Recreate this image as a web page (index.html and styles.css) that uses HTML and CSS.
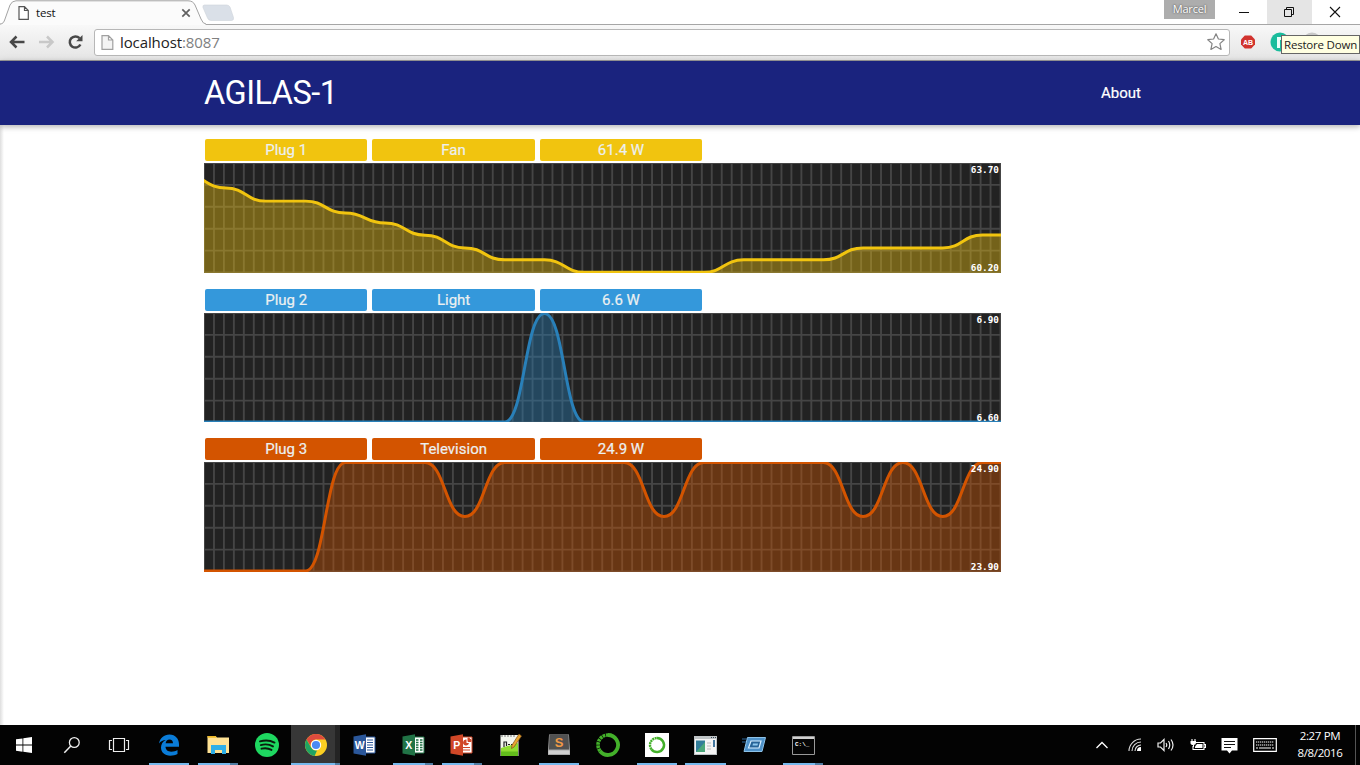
FILE: index.html
```html
<!DOCTYPE html>
<html lang="en">
<head>
<meta charset="utf-8">
<title>test</title>
<link rel="stylesheet" href="styles.css">
</head>
<body>
<div class="screen">
  <div class="tabstrip">
    <div class="tab">
      <svg class="tab-shape" width="206" height="25" viewBox="0 0 206 25"><path d="M0 24.5C3 24 4 22 5 19L10 5Q12 .8 16 .8H188Q193 .8 195 5L201 19Q203 24 206 24.5V25H0Z" fill="#fbfbfb"/><path d="M0 24C3 24 4 22 5 19L10 5Q12 .8 16 .8H188Q193 .8 195 5L201 19Q203 24 206 24" fill="none" stroke="#a3a3a3"/></svg>
      <svg class="page-icon" width="12" height="14" viewBox="0 0 12 14"><path d="M1 .7H6.5L10.3 4.5V13.3H1ZM6.5 .7V4.5H10.3" fill="#fff" stroke="#555" stroke-width="1.2"/></svg>
      <span class="tab-title">test</span>
      <svg class="tab-close" width="10" height="10" viewBox="0 0 10 10"><path d="M1.3 1.3L8.7 8.7M8.7 1.3L1.3 8.7" stroke="#606060" stroke-width="1.7"/></svg>
    </div>
    <svg class="new-tab" width="34" height="18" viewBox="0 0 34 18"><path d="M3.5 1H25.5Q28 1 29 3L32.5 13.5Q33 16.5 30.5 16.5H10Q7.500 16.500 6.500 14L2 3.500Q1.400 1 3.500 1Z" fill="#dae0e8" stroke="#cfd4da" stroke-width=".6"/></svg>
    <div class="user">Marcel</div>
    <div class="win-btn"><svg width="12" height="12" viewBox="0 0 12 12"><path d="M1 6.500H11" stroke="#111"/></svg></div>
    <div class="win-btn restore"><svg width="12" height="12" viewBox="0 0 12 12"><path d="M1.500 3.500H8.500V10.500H1.500ZM3.500 3.500V1.500H10.500V8.500H8.500" fill="none" stroke="#111"/></svg></div>
    <div class="win-btn"><svg width="12" height="12" viewBox="0 0 12 12"><path d="M1 1L11 11M11 1L1 11" stroke="#111" stroke-width="1.100"/></svg></div>
  </div>

  <div class="toolbar">
    <svg class="nav" width="84" height="20" viewBox="0 0 84 20">
      <path d="M9.500 4.500L4 10L9.500 15.500M4.500 10H17.500" fill="none" stroke="#484848" stroke-width="2.500"/>
      <path d="M40 4.500L45.500 10L40 15.500M45 10H32" fill="none" stroke="#c8c8c8" stroke-width="2.500"/>
      <path d="M73.400 12.500A5.600 5.600 0 1 1 72.500 6.200" fill="none" stroke="#484848" stroke-width="2.500"/><path d="M75.500 3V9.300H69.200Z" fill="#484848"/>
    </svg>
    <div class="omnibox">
      <svg width="13" height="15" viewBox="0 0 13 15"><path d="M1 .7H7.500L11.800 5V14.300H1ZM7.500 .7V5H11.800" fill="#f4f4f4" stroke="#a0a0a0" stroke-width="1.200"/></svg>
      <span class="url">localhost<span class="port">:8087</span></span>
      <svg class="star" width="20" height="20" viewBox="0 0 20 20"><path d="M10 1.800L12.400 7L18.200 7.700L13.900 11.600L15.100 17.400L10 14.500L4.900 17.400L6.100 11.600L1.800 7.700L7.600 7Z" fill="#fff" stroke="#848484" stroke-width="1.200" stroke-linejoin="round"/></svg>
    </div>
    <svg class="abp" width="16" height="16" viewBox="0 0 16 16"><path d="M4.800 1.500H11.200L15 5.500V10.500L11.200 14.500H4.800L1 10.500V5.500Z" fill="#d1332e"/><text x="8" y="10.700" class="abp-text">AB</text></svg>
    <svg class="ext" width="60" height="20" viewBox="0 0 60 20"><circle cx="10" cy="10" r="9.500" fill="#1abc9c"/><path d="M7 5H12V8H10V16H7Z" fill="#e9fff9"/><circle cx="42" cy="10" r="9.500" fill="#c8c8c8"/></svg>
    <div class="tooltip">Restore Down</div>
  </div>

  <header class="app-bar"><h1 class="brand">AGILAS-1</h1><a class="about">About</a></header>

  <main class="content">
    <section class="plug yellow" data-chart="0"><div class="chips"><span>Plug 1</span><span>Fan</span><span>61.4 W</span></div></section>
    <section class="plug blue" data-chart="1"><div class="chips"><span>Plug 2</span><span>Light</span><span>6.6 W</span></div></section>
    <section class="plug orange" data-chart="2"><div class="chips"><span>Plug 3</span><span>Television</span><span>24.9 W</span></div></section>
  </main>

  <footer class="taskbar">
    <div class="slot sys"><svg width="16" height="16" viewBox="0 0 16 16"><path d="M0 2.300L6.500 1.400V7.500H0ZM7.300 1.300L16 0V7.500H7.300ZM0 8.400H6.500V14.700L0 13.800ZM7.300 8.400H16V16L7.300 14.800Z" fill="#fff"/></svg></div>
    <div class="slot search"><svg width="18" height="18" viewBox="0 0 18 18"><circle cx="11.300" cy="6.500" r="4.900" fill="none" stroke="#eee" stroke-width="1.300"/><path d="M7.800 10L1.300 16.700" stroke="#eee" stroke-width="1.500"/></svg></div>
    <div class="slot views"><svg width="22" height="16" viewBox="0 0 22 16"><path d="M5.500 1.500H16.500V14.500H5.500ZM4 3.500H1.500V12.500H4M18 3.500H20.500V12.500H18" fill="none" stroke="#eee" stroke-width="1.200"/></svg></div>
    <div class="slot run"><svg width="22" height="22" viewBox="0 0 22 22"><path d="M1 9.500C2 4 6 .5 11.500 .5C17.500 .5 21 5 21 10.300V12.800H7.500C7.700 16 10 17.700 13.200 17.700C15.800 17.700 17.800 17 19.500 16V20C17.500 21.200 15 21.700 12.300 21.700C6.500 21.700 3 18.200 3 13.500C3 10.300 4.800 7.500 7.800 6C5.200 6.200 2.500 7.300 1 9.500ZM7.600 9.300H15C15 6.800 13.700 5.500 11.500 5.500C9.300 5.500 8 7 7.600 9.300Z" fill="#0a7cd8"/></svg></div>
    <div class="slot run multi"><svg width="24" height="22" viewBox="0 0 24 22"><path d="M1.500 2H9.500L11 3.500H23V19H1.500Z" fill="#ffe294"/><path d="M1.500 2H9.500L11 3.800H1.500Z" fill="#eeb927"/><path d="M5 11H20V20H16V16H9V20H5Z" fill="#2eafe8"/></svg></div>
    <div class="slot"><svg width="24" height="24" viewBox="0 0 24 24"><circle cx="12" cy="12" r="12" fill="#1ed760"/><path d="M5 8.400C10 6.900 15.500 7.400 19.500 9.600M5.800 12.100C10 10.900 14.500 11.400 18 13.400M6.500 15.700C10 14.800 13.500 15.200 16.500 16.900" fill="none" stroke="#0a1b0d" stroke-width="1.900" stroke-linecap="round"/></svg></div>
    <div class="slot run chrome multi"><svg width="22" height="22" viewBox="0 0 22 22"><circle cx="11" cy="11" r="11" fill="#fbcf22"/><path d="M1.500 5.500A11 11 0 0 1 20.500 5.500H11A5.500 5.500 0 0 0 5.800 12.500Z" fill="#dd4b3e"/><path d="M1.500 5.500L6.200 13.700A5.500 5.500 0 0 0 12 16.400L9.600 21.900A11 11 0 0 1 1.500 5.500Z" fill="#1fa463"/><circle cx="11" cy="11" r="5.200" fill="#fff"/><circle cx="11" cy="11" r="4.100" fill="#4a8af4"/></svg></div>
    <div class="slot"><svg width="23" height="22" viewBox="0 0 23 22"><path d="M12 3H22V19H12Z" fill="#fff" stroke="#2b579a"/><path d="M14 6H20M14 8.500H20M14 11H20M14 13.500H20M14 16H20" stroke="#2b579a"/><path d="M.5 2.500L13 .3V21.700L.5 19.500Z" fill="#2b579a"/><text x="6.800" y="15" class="office">W</text></svg></div>
    <div class="slot run multi"><svg width="23" height="22" viewBox="0 0 23 22"><path d="M12 3H22V19H12Z" fill="#fff" stroke="#217346"/><path d="M14 6H16.500M18 6H20.500M14 8.500H16.500M18 8.500H20.500M14 11H16.500M18 11H20.500M14 13.500H16.500M18 13.500H20.500M14 16H16.500M18 16H20.500" stroke="#217346" stroke-width="1.400"/><path d="M.5 2.500L13 .3V21.700L.5 19.500Z" fill="#217346"/><text x="6.800" y="15" class="office">X</text></svg></div>
    <div class="slot run multi"><svg width="23" height="22" viewBox="0 0 23 22"><path d="M12 3H22V19H12Z" fill="#fff" stroke="#d04727"/><path d="M16.500 5.500A3 3 0 1 0 19 9H16.500Z" fill="#d04727"/><path d="M18 4V7.500H21A3 3 0 0 0 18 4ZM13 13.500H20M13 16H20" fill="#d04727" stroke="#d04727"/><path d="M.5 2.500L13 .3V21.700L.5 19.500Z" fill="#d04727"/><text x="6.800" y="15" class="office">P</text></svg></div>
    <div class="slot"><svg width="23" height="24" viewBox="0 0 23 24"><path d="M1.500 2H19.500V23H1.500Z" fill="#f4f6ef"/><path d="M2 15L19 10V23H2Z" fill="#91dd32"/><path d="M2 18.500H19V23H2Z" fill="#63bd1c"/><path d="M3 2V4M6 2V4M9 2V4M12 2V4M15 2V4" stroke="#777"/><path d="M5 14V9H7.500V13M9 11.500H11M12 11.500H14" fill="none" stroke="#222" stroke-width="1.200"/><path d="M20 1L22.500 3L15 14L12.500 15.500L13 12Z" fill="#eaa631" stroke="#80511d" stroke-width=".7"/></svg></div>
    <div class="slot run"><svg width="24" height="22" viewBox="0 0 24 22"><path d="M2 .5H22L23 17V21H1V17Z" fill="#a9a9a9"/><path d="M2.500 1H21.500L22 15.500H2Z" fill="#515151"/><path d="M1.500 16.500H22.500V20H1.500Z" fill="#d0d0d0"/><text x="12" y="13" class="sublime">S</text></svg></div>
    <div class="slot"><svg width="24" height="24" viewBox="0 0 24 24"><path d="M12 2A10 10 0 1 1 4 18" fill="none" stroke="#43b02a" stroke-width="3.800"/><path d="M4 18A10 10 0 0 1 12 2" fill="none" stroke="#43b02a" stroke-width="3.600" stroke-dasharray="2.600 .7"/></svg></div>
    <div class="slot run"><svg width="24" height="24" viewBox="0 0 24 24"><path d="M0 0H24V24H0Z" fill="#fff"/><path d="M12 5A7 7 0 1 1 6.400 16.200" fill="none" stroke="#43b02a" stroke-width="2.500"/><path d="M6.400 16.200A7 7 0 0 1 12 5" fill="none" stroke="#43b02a" stroke-width="2.400" stroke-dasharray="2 .6"/></svg></div>
    <div class="slot run"><svg width="23" height="19" viewBox="0 0 23 19"><path d="M0 0H23V19H0Z" fill="#bfc4c6"/><path d="M1 3H22V18H1Z" fill="#f5f5f5"/><path d="M2 4.500H11V16H2Z" fill="#327e9a"/><path d="M2 16L11 6V16Z" fill="#4ba77a"/><path d="M13 7H17M13 10H17M13 13H17" stroke="#bbb"/><path d="M19 4H21V11H19Z" fill="#4478a0"/><path d="M17 1.500H22" stroke="#345" stroke-dasharray="1 1"/></svg></div>
    <div class="slot"><svg width="24" height="18" viewBox="0 0 24 18"><path d="M5.500 1.500H23.500L20 15.500H2Z" fill="#4e91c8" stroke="#8dc2e8"/><path d="M9 5H19L17 12H6.500Z" fill="#286498" stroke="#d8efff" stroke-width="1.200"/><path d="M11 7.500H16L15.500 9.500H10.500Z" fill="#8fc9ef"/><path d="M0 3H5M0 6H4" stroke="#2e6798"/></svg></div>
    <div class="slot run multi"><svg width="23" height="19" viewBox="0 0 23 19"><path d="M.5 .5H22.500V18.500H.5Z" fill="#050505" stroke="#999"/><path d="M1 1H22V3H1Z" fill="#d0d0d0"/><text x="3" y="9.500" class="cmd">C:\_</text></svg></div>
    <div class="tray">
      <svg class="chev" width="14" height="10" viewBox="0 0 14 10"><path d="M1.500 8L7 2.500L12.500 8" fill="none" stroke="#fff" stroke-width="1.300"/></svg>
      <svg class="wifi" width="14" height="14" viewBox="0 0 14 14"><path d="M1 13A12 12 0 0 1 13 1M4 13A9 9 0 0 1 13 4M7 13A6 6 0 0 1 13 7" fill="none" stroke="#ddd" stroke-width="1.100"/><path d="M13 9V13H9A4 4 0 0 1 13 9Z" fill="#fff"/></svg>
      <svg class="vol" width="18" height="14" viewBox="0 0 18 14"><path d="M1 5H3.500L7 1.500V12.500L3.500 9H1ZM9 5Q10.500 7 9 9M11.500 3Q14 7 11.500 11M14 1.500Q18 7 14 12.500" fill="none" stroke="#eee" stroke-width="1.200"/></svg>
      <svg class="bat" width="17" height="14" viewBox="0 0 17 14"><path d="M6 4.500H15V11.500H4V8M15 6.500H16.500V9.500H15M3 3V1M6 3V1M4.500 7V9" fill="none" stroke="#fff" stroke-width="1.100"/><path d="M1.500 3H7V5Q7 7 4.500 7Q1.500 7 1.500 5Z" fill="#fff"/><path d="M8 6H13.500V10H6V8.500Z" fill="#fff"/></svg>
      <svg class="note" width="17" height="17" viewBox="0 0 17 17"><path d="M.5 1H16.500V13.500H11L8.500 16.500L6 13.500H.5Z" fill="#fff"/><path d="M3 4.500H14M3 7.500H14M3 10.500H10" stroke="#111" stroke-width="1.100"/></svg>
      <svg class="kbd" width="24" height="14" viewBox="0 0 24 14"><path d="M.7 .7H23.300V13.300H.7Z" fill="none" stroke="#fff" stroke-width="1.200"/><path d="M3 4H21M3 7H21" stroke="#fff" stroke-width="1.200" stroke-dasharray="1.300 .7"/><path d="M3 10H5M6 10H18M19 10H21" stroke="#fff" stroke-width="1.200"/></svg>
      <div class="clock"><span>2:27 PM</span><span>8/8/2016</span></div>
    </div>
  </footer>
</div>
<script src="charts.js"></script>
</body>
</html>
```
FILE: charts.js
```js
// Each series: [x, y] samples in an 800 x 110 drawing, joined by horizontal-tangent curves.
const X = k => 102 + 40 * k;
const charts = [
  { max: "63.70", min: "60.20", ys: [13, 25.2, 38.3, 38.3, 50.3, 60.3, 72.5, 85.3, 97.3, 97.3, 109.8, 109.8, 109.8, 109.8, 97.3, 97.3, 97.3, 85.3, 85.3, 85.3, 72.3, 72.3] },
  { max: "6.90", min: "6.60", ys: Array.from({ length: 22 }, (_, i) => (i === 9 ? 0.5 : 109.5)) },
  { max: "24.90", min: "23.90", ys: Array.from({ length: 22 }, (_, i) => (i < 4 ? 109.5 : [7, 12, 17, 19].includes(i) ? 54.8 : 0.5)) }
];

document.querySelectorAll(".plug").forEach(el => {
  const c = charts[el.dataset.chart];
  let px = X(-3), py = c.ys[0];
  let line = `M${px} ${py}`;
  c.ys.slice(1).forEach((y, i) => {
    const x = X(i - 2), m = (px + x) / 2;
    line += `C${m} ${py} ${m} ${y} ${x} ${y}`;
    px = x;
    py = y;
  });
  let grid = "";
  for (let x = 0; x <= 800; x += 10) grid += `M${x} 0V110`;
  for (let y = 0; y <= 110; y += 22) grid += `M0 ${y}H800`;
  el.insertAdjacentHTML("beforeend",
    `<svg class="chart" viewBox="0 0 800 110" preserveAspectRatio="none">
      <path class="grid" d="${grid}"/>
      <path class="area" d="${line}V112H${X(-3)}Z"/>
      <path class="line" d="${line}"/>
      <text x="798.500" y="10">${c.max}</text>
      <text x="798.500" y="108">${c.min}</text>
    </svg>`);
});
```
FILE: styles.css
```css
* { box-sizing: border-box; }
body { margin: 0; background: #fff; overflow: hidden; }
svg { display: block; flex: none; }
.screen { width: 1360px; height: 765px; display: flex; flex-direction: column; font-family: "Open Sans", "Noto Sans", sans-serif; }

.tabstrip { height: 25px; flex: none; display: flex; align-items: flex-start; border-bottom: 1px solid #a6a6a6; background: #fff; }
.tab { position: relative; width: 206px; height: 25px; display: flex; align-items: center; padding: 1px 15px 0 18px; flex: none; }
.tab-shape { position: absolute; left: 0; top: 0; }
.page-icon, .tab-title, .tab-close { position: relative; }
.tab-title { margin-left: 6px; font-size: 11.5px; letter-spacing: -.15px; line-height: 16px; color: #111; flex: 1; }
.new-tab { margin: 4px 0 0 -5px; }
.user { margin-left: auto; width: 51px; height: 19px; background: #adadad; color: #fff; font-size: 11px; letter-spacing: -.2px; line-height: 17px; text-align: center; text-shadow: 0 0 2px #333; margin-right: 7px; }
.win-btn { width: 45px; height: 24px; display: flex; align-items: center; justify-content: center; flex: none; padding-right: 1px; }
.win-btn.restore { background: #e5e5e5; }
.win-btn:last-child { width: 48px; padding-right: 2px; }

.toolbar { position: relative; height: 36px; flex: none; display: flex; align-items: center; background: linear-gradient(#f8f8f8, #e5e5e5); border-bottom: 1px solid #9b9b9b; padding: 0 0 1px 7px; }
.omnibox { margin-left: 3px; width: 1136px; height: 27px; border: 1px solid #b7b7b7; border-radius: 3px; background: #fff; display: flex; align-items: center; padding: 0 3px 0 6px; }
.url { flex: 1; margin-left: 6px; font-size: 15px; letter-spacing: -.1px; line-height: 22px; color: #222; }
.port { color: #808080; }
.abp { margin-left: 10px; }
.abp-text { font: bold 7px "Liberation Sans", sans-serif; fill: #fff; text-anchor: middle; }
.ext { margin-left: 14px; }
.tooltip { position: absolute; left: 1281px; top: 10px; width: 79px; height: 19px; background: #ffffe1; border: 1px solid #666; color: #222; font-size: 11.5px; letter-spacing: -.2px; line-height: 18px; text-align: center; white-space: nowrap; }

.app-bar { height: 64px; flex: none; background: #1a237e; color: #fff; font-family: Roboto, sans-serif; display: flex; align-items: center; justify-content: space-between; padding: 0 219px 0 204px; box-shadow: 0 2px 5px rgba(0,0,0,.2), 0 1px 8px rgba(0,0,0,.12); z-index: 1; }
.brand { margin: 0; font-size: 32.5px; letter-spacing: -.5px; font-weight: 400; line-height: 64px; }
.about { font-size: 15px; -webkit-text-stroke: .2px #fff; }

.content { flex: 1; min-height: 0; padding: 14px 0 0 204px; display: flex; flex-direction: column; gap: 16px; background: linear-gradient(90deg, #dedede, #fff 4px); }
.plug { width: 796.5px; height: 133.500px; flex: none; display: flex; flex-direction: column; gap: 2px; }
.chips { display: flex; gap: 5px; height: 22px; padding-left: 1px; flex: none; }
.chips span { width: 162.400px; border-radius: 2px; text-align: center; font: 15px/22px Roboto, sans-serif; color: #ecf0f1; -webkit-text-stroke: .2px #ecf0f1; }
.yellow { --chip: #f1c40f; --line: #f1c40f; }
.blue { --chip: #3498db; --line: #2980b9; }
.orange { --chip: #d35400; --line: #d35400; }
.chips span { background: var(--chip); }
.chart { width: 796.500px; height: 109.500px; background: #222; }
.grid { fill: none; stroke: #777; stroke-opacity: .42; stroke-width: 1.900; }
.area { fill: var(--line); fill-opacity: .4; }
.line { fill: none; stroke: var(--line); stroke-width: 3; }
.chart text { font: bold 9.400px "DejaVu Sans Mono", monospace; fill: #fff; text-anchor: end; }

.taskbar { height: 40px; flex: none; background: #030303; display: flex; }
.slot { width: 48.750px; height: 40px; display: flex; align-items: center; justify-content: center; position: relative; flex: none; }
.slot.sys { width: 48px; }
.slot.search { width: 47.500px; }
.slot.views { width: 49.500px; padding-right: 2px; }
.run::after { content: ""; position: absolute; left: 4.200px; right: 4.300px; bottom: 0; height: 2px; background: #76b9ed; }
.multi::after { background: linear-gradient(90deg, #76b9ed 32px, #4f7da3 32px); }
.chrome { background: linear-gradient(90deg, #373737 44px, #242424 44px); }
.chrome::after { left: 0; right: 0; background: linear-gradient(90deg, #76b9ed 44px, #4f7da3 44px); }
.office { font: bold 10.500px "Liberation Sans", sans-serif; fill: #fff; text-anchor: middle; }
.sublime { font: bold 13px "Liberation Sans", sans-serif; fill: #f29a45; text-anchor: middle; }
.cmd { font: bold 6px "Liberation Mono", monospace; fill: #fff; }
.tray { margin-left: auto; display: flex; align-items: center; height: 40px; border-right: 1px solid #555; margin-right: 4px; }
.wifi { margin-left: 19px; }
.vol { margin-left: 15px; }
.bat { margin-left: 14px; }
.note { margin-left: 15px; }
.kbd { margin-left: 15px; }
.clock { width: 71px; margin-left: 7px; padding: 0 0 3px 1px; display: flex; flex-direction: column; color: #fff; font-size: 11.500px; letter-spacing: -.35px; line-height: 17px; text-align: center; }
```
